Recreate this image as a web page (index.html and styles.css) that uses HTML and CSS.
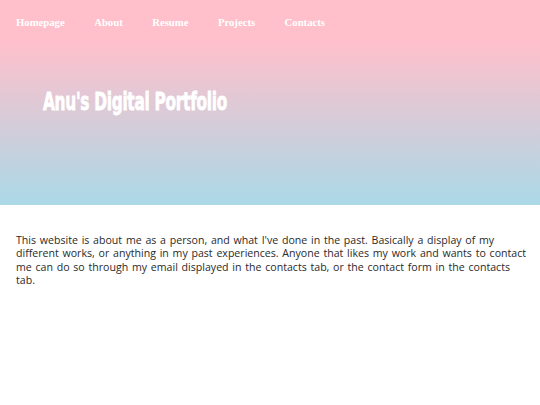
FILE: index.html
```html
<!DOCTYPE html>
<html lang="en">

<head>
    <meta charset="UTF-8">
    <meta content="width=device-width, initial-scale=1.0" name="viewport">
    <title>Anu's Digital Portfolio</title>
    <link rel="stylesheet" href="styles.css">
</head>

<body>

    <header class="hero">
        <nav class="nav">
            <a href="#">Homepage</a>
            <a href="#">About</a>
            <a href="#">Resume</a>
            <a href="#">Projects</a>
            <a href="#">Contacts</a>
        </nav>
        <h1 class="title">Anu's Digital Portfolio</h1>
    </header>

    <!-- Sobre mim -->
    <p class="intro">This website is about me as a person, and what I've done in the past. Basically a display of my different works, or anything in my past experiences. Anyone that likes my work and wants to contact me can do so through my email displayed in the contacts tab, or the contact form in the contacts tab.</p>

</body>

</html>
```

FILE: styles.css
```css
body {
    margin: 0;
    font-family: "Liberation Serif", serif;
    background: white;
}

.hero {
    height: 205px;
    background: linear-gradient(#ffc0cb 20%, #add8e6 98%);
    overflow: hidden;
}

.nav {
    display: flex;
    gap: 29.5px;
    padding: 16px 16px 0;
}

.nav a {
    color: white;
    font-weight: bold;
    font-size: 10.7px;
    text-decoration: none;
}

/* fonte condensada tipo Anton */
.title {
    margin: 59px 0 0 43px;
    color: white;
    font-family: "DejaVu Sans", sans-serif;
    font-size: 25px;
    font-weight: bold;
    letter-spacing: -0.5px;
    -webkit-text-stroke: 0.8px white;
    transform: scaleX(0.616);
    transform-origin: left center;
}

.intro {
    margin: 29px 12px 29px 16px;
    color: #2a2a2a;
    font-family: "Open Sans", sans-serif;
    font-size: 10.6px;
    line-height: 13.3px;
    word-spacing: 1px;
}
```
